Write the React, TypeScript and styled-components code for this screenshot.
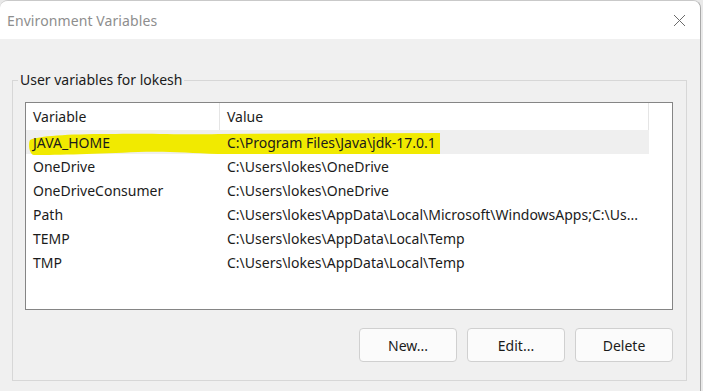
import React from "react";
import styled, { createGlobalStyle } from "styled-components";

const Global = createGlobalStyle`
  html, body {
    margin: 0;
    padding: 0;
    background: #e9e9e9;
  }
  body {
    font-family: "Noto Sans", "Open Sans", sans-serif;
    overflow: hidden;
  }
`;

const Window = styled.div`
  position: relative;
  width: 700px;
  height: 391px;
  border-top: 1px solid #c9c9c9;
  border-right: 1px solid #a9a9a9;
  border-top-left-radius: 8px;
  border-top-right-radius: 8px;
  overflow: hidden;
  background: #f0f0f0;
  display: flex;
  flex-direction: column;
`;

const TitleBar = styled.div`
  height: 38px;
  flex: none;
  background: #ffffff;
  display: flex;
  align-items: center;
  justify-content: space-between;
  padding: 0 14px 0 7px;
`;

const Title = styled.span`
  font-size: 14px;
  color: #8e8e8e;
  letter-spacing: 0.1px;
`;

const CloseButton = styled.button`
  width: 14px;
  height: 14px;
  padding: 0;
  border: none;
  background: transparent;
  display: flex;
  align-items: center;
  justify-content: center;
`;

const Body = styled.div`
  flex: 1;
  padding: 31px 0 0 12px;
`;

const Group = styled.fieldset`
  margin: 0;
  width: 675px;
  box-sizing: border-box;
  border: 1px solid #d7d7d7;
  padding: 12px 13px 18px 12px;
`;

const GroupLabel = styled.legend`
  font-size: 14px;
  line-height: 20px;
  color: #1b1b1b;
  padding: 0 2px;
  margin-left: -7px;
`;

const ListBox = styled.div`
  position: relative;
  width: 648px;
  height: 208px;
  box-sizing: border-box;
  border: 1px solid #858585;
  background: #ffffff;
`;

const Header = styled.div`
  display: flex;
  height: 27px;
`;

const HeaderCell = styled.div<{ $w: number }>`
  width: ${(p) => p.$w}px;
  flex: none;
  box-sizing: border-box;
  border-right: 1px solid #e5e5e5;
  padding-left: 7px;
  display: flex;
  align-items: center;
  font-size: 14px;
  color: #1b1b1b;
`;

const Row = styled.div<{ $selected?: boolean }>`
  display: flex;
  width: 623px;
  height: 24px;
  background: ${(p) => (p.$selected ? "#efefef" : "transparent")};
`;

const Cell = styled.div<{ $w: number }>`
  position: relative;
  width: ${(p) => p.$w}px;
  flex: none;
  box-sizing: border-box;
  padding-left: 7px;
  display: flex;
  align-items: center;
  font-size: 14px;
  color: #1b1b1b;
  white-space: nowrap;
  overflow: hidden;
`;

const Highlight = styled.svg`
  position: absolute;
  left: 2px;
  top: 27px;
  width: 414px;
  height: 26px;
  pointer-events: none;
`;

const Rows = styled.div`
  position: relative;
`;

const RowText = styled.span`
  position: relative;
  z-index: 1;
`;

const ButtonRow = styled.div`
  display: flex;
  justify-content: flex-end;
  gap: 10px;
  margin-top: 18px;
  width: 648px;
`;

const Button = styled.button`
  width: 98px;
  height: 34px;
  box-sizing: border-box;
  border: 1px solid #d0d0d0;
  border-radius: 4px;
  background: #fbfbfb;
  font-family: inherit;
  font-size: 14px;
  color: #1b1b1b;
  padding: 0;
`;

const COL1 = 194;
const COL2 = 429;

const rows = [
  ["JAVA_HOME", "C:\\Program Files\\Java\\jdk-17.0.1"],
  ["OneDrive", "C:\\Users\\lokes\\OneDrive"],
  ["OneDriveConsumer", "C:\\Users\\lokes\\OneDrive"],
  ["Path", "C:\\Users\\lokes\\AppData\\Local\\Microsoft\\WindowsApps;C:\\Us..."],
  ["TEMP", "C:\\Users\\lokes\\AppData\\Local\\Temp"],
  ["TMP", "C:\\Users\\lokes\\AppData\\Local\\Temp"],
];

export default function App() {
  return (
    <>
      <Global />
      <Window>
        <TitleBar>
          <Title>Environment Variables</Title>
          <CloseButton aria-label="Close">
            <svg width="13" height="13" viewBox="0 0 13 13">
              <path d="M1 1 L12 12 M12 1 L1 12" stroke="#6b6b6b" strokeWidth="1" fill="none" />
            </svg>
          </CloseButton>
        </TitleBar>
        <Body>
          <Group>
            <GroupLabel>User variables for lokesh</GroupLabel>
            <ListBox>
              <Header>
                <HeaderCell $w={COL1}>Variable</HeaderCell>
                <HeaderCell $w={COL2}>Value</HeaderCell>
              </Header>
              <Rows>
                {rows.map(([name, value], i) => (
                  <Row key={name} $selected={i === 0}>
                    <Cell $w={COL1}>
                      <RowText>{name}</RowText>
                    </Cell>
                    <Cell $w={COL2}>
                      <RowText>{value}</RowText>
                    </Cell>
                  </Row>
                ))}
              </Rows>
              <Highlight viewBox="0 0 414 26" preserveAspectRatio="none">
                <path
                  d="M2 10 C 10 6, 40 4, 80 4 C 130 3, 150 5, 190 4 L 412 3 L 412 24 L 190 24 C 160 23, 140 21, 110 22 C 70 24, 30 25, 6 25 C 1 24, 0 14, 2 10 Z"
                  fill="#f1ea00"
                />
              </Highlight>
            </ListBox>
            <ButtonRow>
              <Button>New...</Button>
              <Button>Edit...</Button>
              <Button>Delete</Button>
            </ButtonRow>
          </Group>
        </Body>
      </Window>
    </>
  );
}
